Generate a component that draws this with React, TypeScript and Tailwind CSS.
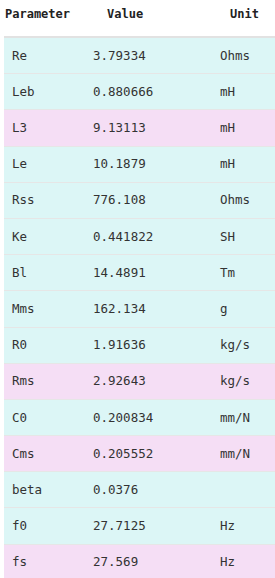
import React from 'react';

type Row = { name: string; value: string; unit: string; pink?: boolean };

const rows: Row[] = [
  { name: 'Re', value: '3.79334', unit: 'Ohms' },
  { name: 'Leb', value: '0.880666', unit: 'mH' },
  { name: 'L3', value: '9.13113', unit: 'mH', pink: true },
  { name: 'Le', value: '10.1879', unit: 'mH' },
  { name: 'Rss', value: '776.108', unit: 'Ohms' },
  { name: 'Ke', value: '0.441822', unit: 'SH' },
  { name: 'Bl', value: '14.4891', unit: 'Tm' },
  { name: 'Mms', value: '162.134', unit: 'g' },
  { name: 'R0', value: '1.91636', unit: 'kg/s' },
  { name: 'Rms', value: '2.92643', unit: 'kg/s', pink: true },
  { name: 'C0', value: '0.200834', unit: 'mm/N' },
  { name: 'Cms', value: '0.205552', unit: 'mm/N', pink: true },
  { name: 'beta', value: '0.0376', unit: '' },
  { name: 'f0', value: '27.7125', unit: 'Hz' },
  { name: 'fs', value: '27.569', unit: 'Hz', pink: true },
];

export default function App() {
  return (
    <div className="w-[275px] h-[578px] overflow-hidden bg-white pl-1 font-['DejaVu_Sans_Mono',monospace]">
      {/* Header */}
      <div className="flex h-[28px] items-center text-[12px] font-bold text-[#222]">
        <span className="w-[103px] pl-px">Parameter</span>
        <span className="w-[123px]">Value</span>
        <span>Unit</span>
      </div>
      <div className="mt-[8px] border-t-2 border-[#e2e2e2]">
        {rows.map((r) => (
          <div
            key={r.name}
            className={
              'grid h-[36.2px] grid-cols-[81px_127px_1fr] items-center border-b border-[#e6e6e6] pl-2 pt-px text-[12.5px] text-[#333] ' +
              (r.pink ? 'bg-[#f5def5]' : 'bg-[#dcf6f6]')
            }
          >
            <span>{r.name}</span>
            <span>{r.value}</span>
            <span>{r.unit}</span>
          </div>
        ))}
      </div>
    </div>
  );
}
